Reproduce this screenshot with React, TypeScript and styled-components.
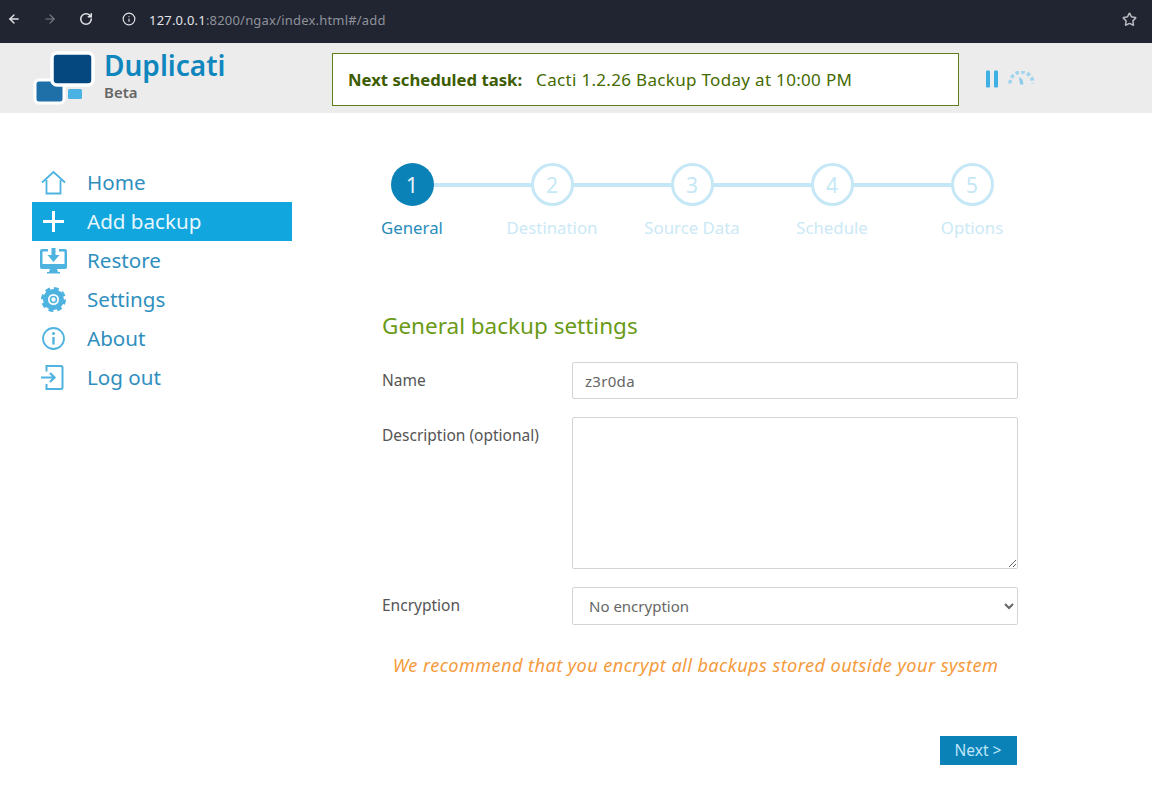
import React from "react";
import styled, { createGlobalStyle } from "styled-components";
import { ArrowLeft, ArrowRight, RotateCw, Info, Star } from "lucide-react";

const Global = createGlobalStyle`
  html, body { margin: 0; padding: 0; background: #fff; }
  body { font-family: "Noto Sans", "Open Sans", sans-serif; width: 1152px; height: 800px; overflow: hidden; }
  * { box-sizing: border-box; }
`;

const BrowserBar = styled.div`
  height: 43px;
  background: #212531;
  display: flex;
  align-items: center;
  padding: 0 15px 5px 7px;
  color: #e3e4e8;
`;
const NavIcon = styled.span<{ $dim?: boolean; $gap?: number }>`
  display: flex;
  width: 14px;
  margin-right: ${(p) => p.$gap ?? 0}px;
  color: ${(p) => (p.$dim ? "#7d808a" : "#e3e4e8")};
`;
const Url = styled.div`
  font-size: 13px;
  letter-spacing: 0.2px;
  color: #8f929b;
  margin: 1px 0 0 13px;
  flex: 1;
  b { font-weight: 400; color: #e3e4e8; }
`;

const Header = styled.header`
  height: 70px;
  background: #ececec;
  display: flex;
  align-items: center;
  padding: 2px 0 0 32px;
`;
const Brand = styled.div`
  width: 300px;
  display: flex;
  gap: 7px;
  align-items: center;
`;
const BrandText = styled.div`
  display: flex;
  flex-direction: column;
  margin-top: -11px;
`;
const BrandName = styled.div`
  font-size: 28px;
  line-height: 37px;
  font-weight: 600;
  color: #0f86bd;
`;
const BrandSub = styled.div`
  font-size: 15px;
  line-height: 16px;
  font-weight: 600;
  color: #666;
`;
const Schedule = styled.div`
  width: 627px;
  height: 53px;
  background: #fff;
  border: 1px solid #5f7f1a;
  display: flex;
  align-items: center;
  padding: 1px 0 0 15px;
  font-size: 17px;
  color: #456b00;
  gap: 14px;
  b { font-weight: 700; color: #3d5c00; font-size: 16.7px; }
  span { letter-spacing: 0.32px; }
`;
const Status = styled.div`
  display: flex;
  align-items: center;
  gap: 4px;
  margin-left: 25px;
`;

const Main = styled.main`
  display: flex;
  padding: 50px 0 0 32px;
`;
const Side = styled.nav`
  width: 260px;
  margin-right: 90px;
  display: flex;
  flex-direction: column;
`;
const NavItem = styled.div<{ $active?: boolean }>`
  height: 39px;
  display: flex;
  align-items: center;
  padding: 0 0 2px 7px;
  font-size: 20.6px;
  gap: 19px;
  color: ${(p) => (p.$active ? "#e6f6fd" : "#2f8fbe")};
  background: ${(p) => (p.$active ? "#12a6de" : "transparent")};
`;
const NavGlyph = styled.svg`
  width: 29px;
  height: 29px;
  flex: none;
  margin-bottom: -2px;
`;

const Content = styled.div`
  width: 636px;
`;
const Steps = styled.div`
  display: flex;
  width: 700px;
  margin-left: -40px;
`;
const Step = styled.div`
  width: 140px;
  display: flex;
  flex-direction: column;
  align-items: center;
  position: relative;
`;
const Connector = styled.span`
  position: absolute;
  left: 50%;
  width: 140px;
  top: 20px;
  height: 4px;
  background: #c3e7f7;
`;
const Circle = styled.div<{ $active?: boolean }>`
  width: 43px;
  height: 43px;
  border-radius: 50%;
  position: relative;
  display: flex;
  align-items: center;
  justify-content: center;
  font-size: 21px;
  background: ${(p) => (p.$active ? "#0a82b8" : "#fff")};
  border: ${(p) => (p.$active ? "none" : "3px solid #c6e8f6")};
  color: ${(p) => (p.$active ? "#e8f6fc" : "#c6e8f6")};
`;
const StepLabel = styled.div<{ $active?: boolean }>`
  margin-top: 11px;
  font-size: 16.8px;
  line-height: 22px;
  color: ${(p) => (p.$active ? "#2a8dbb" : "#cbe9f6")};
`;
const Title = styled.h2`
  margin: 70px 0 19px;
  font-size: 22.5px;
  line-height: 34px;
  font-weight: 400;
  color: #6a9a16;
`;
const Row = styled.div`
  display: flex;
  margin-bottom: 18px;
`;
const Label = styled.label`
  width: 190px;
  font-size: 15.5px;
  line-height: 36px;
  color: #555;
  flex: none;
`;
const Input = styled.input`
  width: 446px;
  height: 37px;
  border: 1px solid #d4d4d4;
  border-radius: 2px;
  padding: 0 12px;
  font: 15px "Noto Sans", sans-serif;
  letter-spacing: 0.3px;
  color: #666;
  background: #fff;
`;
const Area = styled.textarea`
  width: 446px;
  height: 152px;
  border: 1px solid #d4d4d4;
  border-radius: 2px;
  display: block;
  background: #fff;
`;
const Select = styled.select`
  width: 446px;
  height: 38px;
  border: 1px solid #d4d4d4;
  border-radius: 2px;
  padding: 0 12px;
  font: 15px "Noto Sans", sans-serif;
  color: #666;
  background: #fff;
`;
const Warn = styled.p`
  margin: 27px 0 0;
  padding-right: 9px;
  text-align: center;
  white-space: nowrap;
  font-style: italic;
  font-size: 18.2px;
  letter-spacing: 0.4px;
  line-height: 26px;
  color: #f59b3c;
`;
const Actions = styled.div`
  display: flex;
  justify-content: flex-end;
  margin: 58px 1px 0 0;
`;
const Next = styled.button`
  width: 77px;
  height: 29px;
  border: none;
  background: #0a82b8;
  color: #bfe6f7;
  font: 15.5px "Noto Sans", sans-serif;
  padding: 0 1px 2px 0;
`;

const c = "#4fb3e0";
const icons: Record<string, React.ReactNode> = {
  home: <path d="M3 14.500 14.500 4 26 14.500M7.500 12V25.500H21.500V12" fill="none" stroke={c} strokeWidth="1.800" />,
  add: <path d="M4 14.500H25M14.500 4V25" fill="none" stroke="#fff" strokeWidth="3" />,
  restore: (
    <g>
      <path d="M9 3H3a2 2 0 0 0-2 2v15a2 2 0 0 0 2 2h23a2 2 0 0 0 2-2V5a2 2 0 0 0-2-2h-6v2.500h5.500V19H3.500V5.500H9Z" fill={c} />
      <path d="M1 18h27v3a2 2 0 0 1-2 2H3a2 2 0 0 1-2-2Z" fill={c} />
      <path d="M12.500 2h4v7h4L14.500 16l-6-7h4Z" fill={c} />
      <path d="M11 23h7l1 3h2v1.500H8V26h2Z" fill={c} />
    </g>
  ),
  settings: (
    <g>
      <circle cx="14.500" cy="14.500" r="8" fill="none" stroke={c} strokeWidth="5" />
      <circle cx="14.500" cy="14.500" r="10.500" fill="none" stroke={c} strokeWidth="4" strokeDasharray="4.600 3.650" />
      <circle cx="14.500" cy="14.500" r="3" fill="none" stroke={c} strokeWidth="1.600" />
    </g>
  ),
  about: (
    <g>
      <circle cx="14.500" cy="14.500" r="10.500" fill="none" stroke={c} strokeWidth="1.800" />
      <circle cx="14.500" cy="9.500" r="1.500" fill={c} />
      <path d="M14.500 13v7.500" stroke={c} strokeWidth="2.400" />
    </g>
  ),
  logout: (
    <g fill="none" stroke={c} strokeWidth="2">
      <path d="M7.500 8.500V3h14.500a1.500 1.500 0 0 1 1.500 1.500v20a1.500 1.500 0 0 1-1.500 1.500H7.500v-5" />
      <path d="M2 14.500h13M11 10l4.500 4.500L11 19" strokeWidth="2.200" />
    </g>
  ),
};

const items = [
  ["home", "Home"],
  ["add", "Add backup"],
  ["restore", "Restore"],
  ["settings", "Settings"],
  ["about", "About"],
  ["logout", "Log out"],
];
const steps = ["General", "Destination", "Source Data", "Schedule", "Options"];

export default function App() {
  return (
    <>
      <Global />
      <BrowserBar>
        <NavIcon $gap={22}><ArrowLeft size={14} strokeWidth={2.4} /></NavIcon>
        <NavIcon $dim $gap={22}><ArrowRight size={14} strokeWidth={2} /></NavIcon>
        <NavIcon $gap={29}><RotateCw size={14} strokeWidth={2.6} /></NavIcon>
        <NavIcon><Info size={14} strokeWidth={2} /></NavIcon>
        <Url><b>127.0.0.1</b>:8200/ngax/index.html#/add</Url>
        <Star size={15} color="#b9bac0" strokeWidth={2.4} />
      </BrowserBar>
      <Header>
        <Brand>
          <svg width="65" height="58" viewBox="0 0 65 58">
            <rect x="3" y="30" width="29" height="23" rx="4" fill="#1f6fa8" stroke="#fff" strokeWidth="3" />
            <rect x="36" y="39" width="14" height="10" rx="1.500" fill="#49b2e3" />
            <rect x="20" y="3" width="41" height="32" rx="5" fill="#04487f" stroke="#fff" strokeWidth="3.500" />
          </svg>
          <BrandText>
            <BrandName>Duplicati</BrandName>
            <BrandSub>Beta</BrandSub>
          </BrandText>
        </Brand>
        <Schedule>
          <b>Next scheduled task:</b>
          <span>Cacti 1.2.26 Backup Today at 10:00 PM</span>
        </Schedule>
        <Status>
          <svg width="20" height="20" viewBox="0 0 20 20">
            <rect x="2" y="1.500" width="4" height="17" rx="1" fill="#3fb0e3" />
            <rect x="10" y="1.500" width="4" height="17" rx="1" fill="#3fb0e3" />
          </svg>
          <svg width="27" height="16" viewBox="0 0 27 16">
            <path d="M2 12.500 A11.500 11.500 0 0 1 25 12.500" fill="none" stroke="#9fd3ee" strokeWidth="3.500" strokeDasharray="3.500 2.400" />
            <path d="M11 6l3.500 2.500 1 5-3.500 0Z" fill="#8ccbea" />
          </svg>
        </Status>
      </Header>
      <Main>
        <Side>
          {items.map(([k, t]) => (
            <NavItem key={k} $active={k === "add"}>
              <NavGlyph viewBox="0 0 29 29">{icons[k]}</NavGlyph>
              {t}
            </NavItem>
          ))}
        </Side>
        <Content>
          <Steps>
            {steps.map((s, i) => (
              <Step key={s}>
                {i < 4 && <Connector />}
                <Circle $active={i === 0}>{i + 1}</Circle>
                <StepLabel $active={i === 0}>{s}</StepLabel>
              </Step>
            ))}
          </Steps>
          <Title>General backup settings</Title>
          <Row>
            <Label>Name</Label>
            <Input defaultValue="z3r0da" />
          </Row>
          <Row>
            <Label>Description (optional)</Label>
            <Area />
          </Row>
          <Row>
            <Label>Encryption</Label>
            <Select defaultValue="none"><option value="none">No encryption</option></Select>
          </Row>
          <Warn>We recommend that you encrypt all backups stored outside your system</Warn>
          <Actions><Next>Next &gt;</Next></Actions>
        </Content>
      </Main>
    </>
  );
}
